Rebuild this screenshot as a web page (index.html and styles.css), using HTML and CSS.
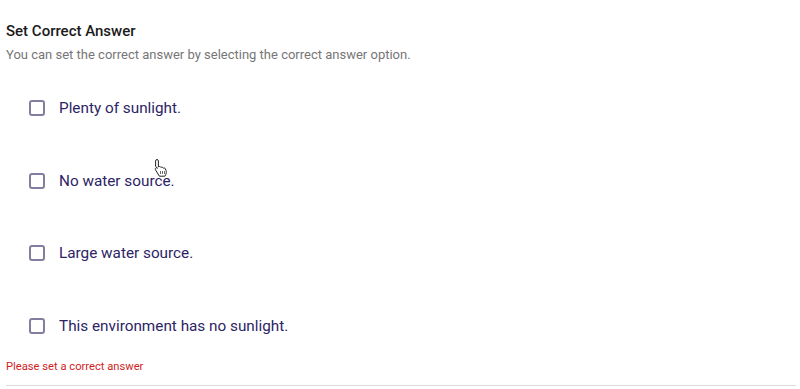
FILE: index.html
```html
<!DOCTYPE html>
<html>
<head>
<meta charset="utf-8">
<link rel="stylesheet" href="styles.css">
</head>
<body>
<div class="panel">
  <h2 class="title">Set Correct Answer</h2>
  <p class="subtitle">You can set the correct answer by selecting the correct answer option.</p>
  <div class="options">
    <label class="option"><span class="box"></span><span class="text">Plenty of sunlight.</span></label>
    <label class="option"><span class="box"></span><span class="text">No water source.</span></label>
    <label class="option"><span class="box"></span><span class="text">Large water source.</span></label>
    <label class="option"><span class="box"></span><span class="text">This environment has no sunlight.</span></label>
  </div>
  <div class="error">Please set a correct answer</div>
  <div class="rule"></div>
  <svg class="cursor" width="18" height="20" viewBox="0 0 18 20">
    <path d="M5 1.5c.8 0 1.4.6 1.4 1.4v6l.6-.3c.7-.3 1.5 0 1.8.6l.2.3.3-.2c.7-.3 1.5 0 1.8.6l.2.3.3-.1c.7-.3 1.5 0 1.8.7l.6 1.6c.5 1.4.4 3-.3 4.3l-.8 1.5H7.4L3.6 12c-.5-.6-.4-1.4.2-1.9.5-.4 1.2-.4 1.7 0L3.6 8.5V2.9c0-.8.6-1.4 1.4-1.4z" fill="#fff" stroke="#222" stroke-width="1"/>
    <path d="M8.5 13v3M10.5 13v3M12.5 13v3" stroke="#444" stroke-width=".8"/>
  </svg>
</div>
</body>
</html>
```
FILE: styles.css
```css
html, body {
  margin: 0;
  padding: 0;
  background: #fff;
}
body {
  font-family: Roboto, "Liberation Sans", sans-serif;
}
.panel {
  position: relative;
  padding: 21px 6px 0 6px;
  height: 389px;
  box-sizing: border-box;
}
.title {
  margin: 0;
  font-size: 15px;
  font-weight: 500;
  line-height: 20px;
  color: #1a1a1a;
}
.subtitle {
  margin: 5px 0 0 0;
  font-size: 13px;
  line-height: 18px;
  color: #767676;
}
.options {
  display: flex;
  flex-direction: column;
  gap: 52.5px;
  margin-top: 34px;
  padding-left: 23px;
}
.option {
  display: flex;
  align-items: center;
  gap: 14px;
  height: 20px;
  cursor: pointer;
}
.box {
  width: 12px;
  height: 12px;
  border: 2px solid #857d9f;
  border-radius: 3px;
  flex: none;
}
.text {
  font-size: 15.3px;
  color: #2d2466;
  line-height: 20px;
}
.error {
  margin-top: 23px;
  font-size: 11.2px;
  line-height: 16px;
  color: #d01e1e;
}
.rule {
  margin-top: 10px;
  height: 1px;
  background: #dcdcdc;
  margin-right: -2px;
}
.cursor {
  position: absolute;
  left: 152px;
  top: 158px;
}
```
